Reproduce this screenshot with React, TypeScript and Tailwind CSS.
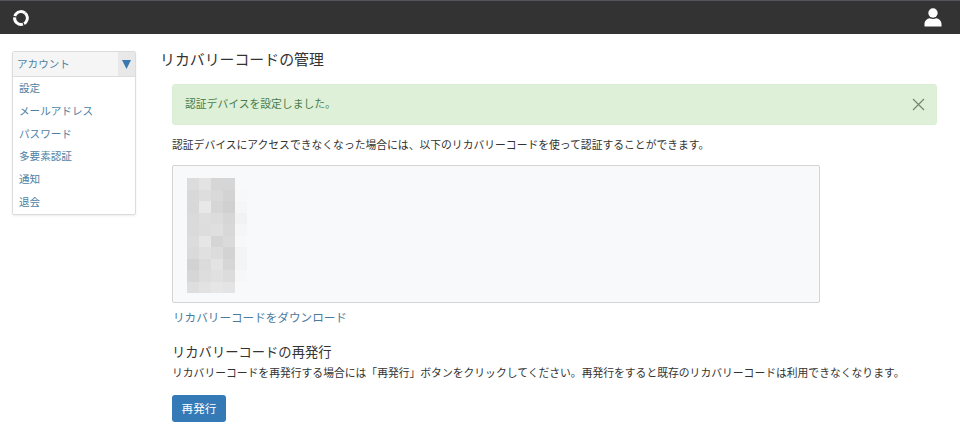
const FONT = '"Liberation Sans", "Noto Sans CJK JP", sans-serif';

const mosaic = [
  ["#dcdcdc", "#e3e3e3", "#d6d6d6", "#d6d6d6", "#f8f9fa"],
  ["#d8d8d8", "#dddddd", "#d9d9d9", "#d3d3d3", "#f7f8f9"],
  ["#d8d8d8", "#e8e8e8", "#d6d6d6", "#d0d0d0", "#f5f6f7"],
  ["#dadada", "#dedede", "#dcdcdc", "#d6d6d6", "#f1f2f3"],
  ["#dadada", "#dddddd", "#dfdfdf", "#d8d8d8", "#f5f6f7"],
  ["#dcdcdc", "#e6e6e6", "#d5d5d5", "#dadada", "#f7f8f9"],
  ["#dadada", "#e0e0e0", "#dcdcdc", "#d3d3d3", "#f3f4f5"],
  ["#d2d2d2", "#dbdbdb", "#e3e3e3", "#d6d6d6", "#f3f4f5"],
  ["#d6d6d6", "#dddddd", "#e0e0e0", "#dcdcdc", "#f6f7f8"],
  ["#dedede", "#e2e2e2", "#e6e6e6", "#e4e4e4", "#f8f9fa"],
];

const menu = ["設定", "メールアドレス", "パスワード", "多要素認証", "通知", "退会"];

export default function App() {
  return (
    <div className="w-[960px] h-[445px] overflow-hidden bg-white text-[#333333]" style={{ fontFamily: FONT }}>
      <header className="h-[34px] bg-[#333333] border-t border-[#55555c] flex items-center justify-between pl-[12px] pr-[18px]">
        <svg width="18" height="18" viewBox="0 0 18 18" fill="none">
          <circle cx="9" cy="9" r="6.4" stroke="#ffffff" strokeWidth="3" strokeDasharray="12.2 1.2" transform="rotate(-50 9 9)" />
        </svg>
        <svg width="18" height="19" viewBox="0 0 18 19" fill="#ffffff">
          <circle cx="9" cy="5" r="4.7" />
          <path d="M0.5 18.5 V16 C0.5 12.8 3 10.6 5.8 10.2 C7.6 11.2 10.4 11.2 12.2 10.2 C15 10.6 17.5 12.8 17.5 16 V18.5 Z" />
        </svg>
      </header>

      <div className="flex items-start">
        <aside className="w-[124px] ml-[12px] mt-[17px] border border-[#dcdcdc] rounded-[2px] shadow-[0_1px_2px_rgba(0,0,0,0.08)]">
          <div className="h-[25px] flex items-stretch bg-[#f5f5f5] border-b border-[#dddddd]">
            <span className="flex-1 pl-[4px] text-[10.6px] leading-[24px] text-[#4f7fa3]">アカウント</span>
            <span className="w-[17px] bg-[#e8e8e8] flex items-center justify-center">
              <svg width="9" height="9" viewBox="0 0 9 9" fill="#3a78b0"><path d="M0 0H9L4.5 9Z" /></svg>
            </span>
          </div>
          <ul className="pl-[6px]">
            {menu.map((m) => (
              <li key={m} className="h-[22.8px] text-[10.6px] leading-[22px] text-[#4f7fa3]">{m}</li>
            ))}
          </ul>
        </aside>

        <main className="ml-[24px] flex-1">
          <h1 className="mt-[16px] text-[14.9px] leading-[20px] font-normal">リカバリーコードの管理</h1>

          <div className="ml-[12px] mr-[23px]">
            <div className="mt-[14px] h-[41px] bg-[#dff0d8] border border-[#dbeed3] rounded-[3px] flex items-center justify-between pl-[12px] pr-[11px] text-[#4a7d4b]">
              <span className="text-[10.8px]">認証デバイスを設定しました。</span>
              <svg width="13" height="13" viewBox="0 0 13 13" stroke="#6f8a70" strokeWidth="1.2" fill="none">
                <path d="M1 1L12 12M12 1L1 12" />
              </svg>
            </div>

            <p className="mt-[13px] text-[10.8px] leading-[14px]">
              認証デバイスにアクセスできなくなった場合には、以下のリカバリーコードを使って認証することができます。
            </p>

            <div className="mt-[13px] w-[648px] h-[138px] bg-[#f7f9fb] border border-[#d5d5d5] rounded-[2px] pl-[14px] pt-[12px]">
              <div className="grid grid-cols-[12px_12px_12px_12px_12px] auto-rows-[11.5px] w-[60px] blur-[0.6px]">
                {mosaic.flat().map((c, i) => (
                  <div key={i} style={{ backgroundColor: c }} />
                ))}
              </div>
            </div>

            <a className="block mt-[7px] ml-[1px] text-[11.6px] leading-[16px] text-[#4a7a9c]">リカバリーコードをダウンロード</a>

            <h2 className="mt-[18px] text-[13.3px] leading-[18px] font-normal">リカバリーコードの再発行</h2>
            <p className="mt-[4px] text-[10.8px] leading-[14px]">
              リカバリーコードを再発行する場合には「再発行」ボタンをクリックしてください。再発行をすると既存のリカバリーコードは利用できなくなります。
            </p>
            <button className="mt-[15px] w-[54px] h-[27px] bg-[#337ab7] rounded-[3px] text-white text-[11.6px]">再発行</button>
          </div>
        </main>
      </div>
    </div>
  );
}
